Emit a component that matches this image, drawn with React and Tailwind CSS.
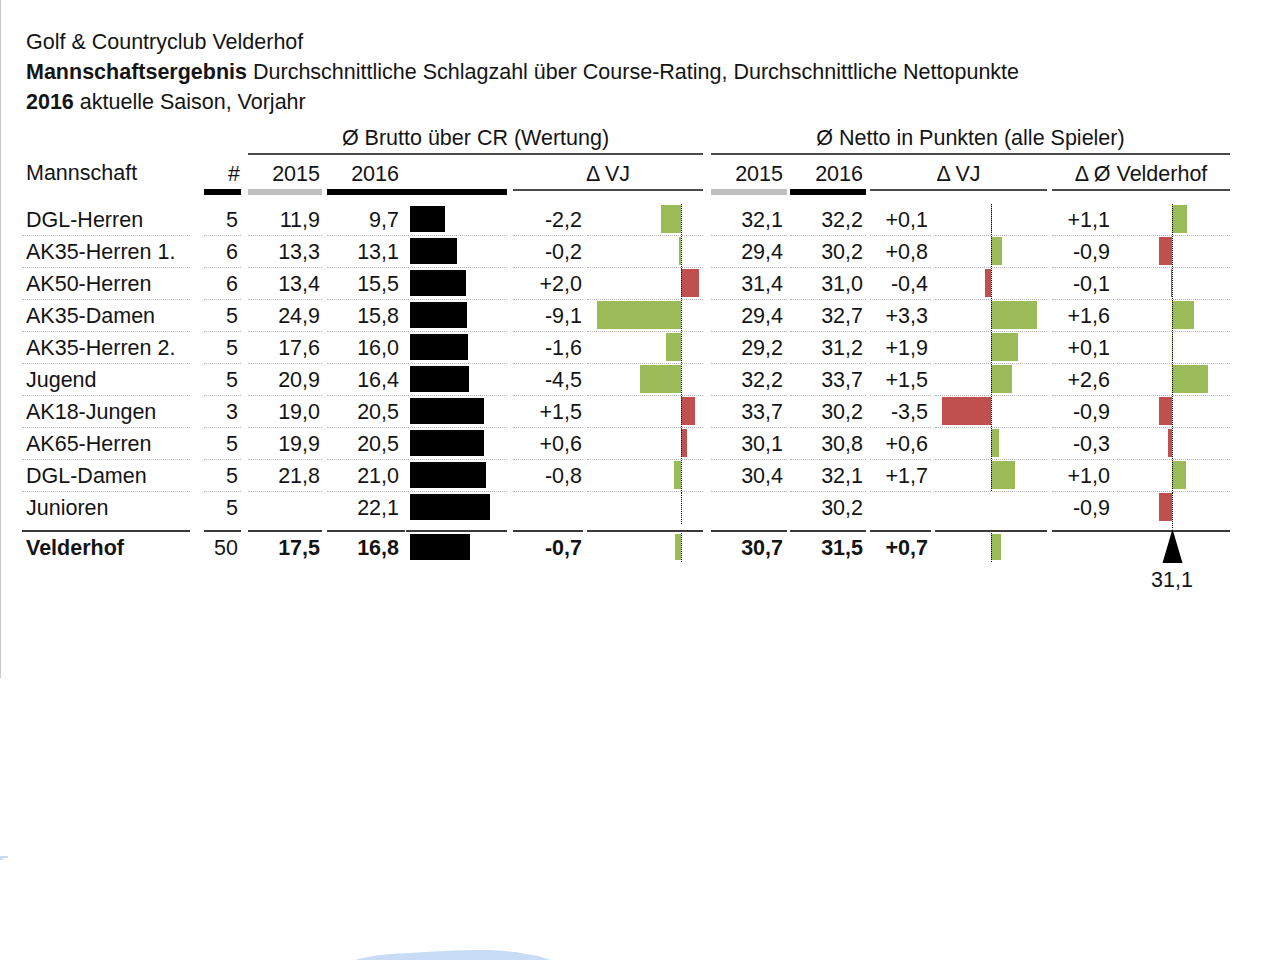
import React from "react";

const rows = [
  ["DGL-Herren", "5", "11,9", "9,7", 9.7, -2.2, "32,1", "32,2", 0.1, 1.1],
  ["AK35-Herren 1.", "6", "13,3", "13,1", 13.1, -0.2, "29,4", "30,2", 0.8, -0.9],
  ["AK50-Herren", "6", "13,4", "15,5", 15.5, 2.0, "31,4", "31,0", -0.4, -0.1],
  ["AK35-Damen", "5", "24,9", "15,8", 15.8, -9.1, "29,4", "32,7", 3.3, 1.6],
  ["AK35-Herren 2.", "5", "17,6", "16,0", 16.0, -1.6, "29,2", "31,2", 1.9, 0.1],
  ["Jugend", "5", "20,9", "16,4", 16.4, -4.5, "32,2", "33,7", 1.5, 2.6],
  ["AK18-Jungen", "3", "19,0", "20,5", 20.5, 1.5, "33,7", "30,2", -3.5, -0.9],
  ["AK65-Herren", "5", "19,9", "20,5", 20.5, 0.6, "30,1", "30,8", 0.6, -0.3],
  ["DGL-Damen", "5", "21,8", "21,0", 21.0, -0.8, "30,4", "32,1", 1.7, 1.0],
  ["Junioren", "5", "", "22,1", 22.1, null, "", "30,2", null, -0.9],
];

function fmt(v) {
  if (v == null) return "";
  const s = Math.abs(v).toFixed(1).replace(".", ",");
  return (v < 0 ? "-" : "+") + s;
}

function Delta({ v, scale, leftCls, axisCls, goodNeg, axis = true, barH = "h-[28px]", padTop = "pt-[1px]" }) {
  const w = v == null ? 0 : Math.abs(v) * scale;
  const good = v != null && (goodNeg ? v < 0 : v > 0);
  const color = good ? "bg-[#9bbb59]" : "bg-[#c0504d]";
  return (
    <div className="relative flex h-full">
      <div className={`${leftCls} flex justify-end items-start ${padTop}`}>
        {v != null && v < 0 && <div className={`${color} ${barH}`} style={{ width: w }} />}
      </div>
      <div className={`flex-1 flex items-start ${padTop}`}>
        {v != null && v > 0 && <div className={`${color} ${barH}`} style={{ width: w }} />}
      </div>
      {axis && <div className={`absolute top-0 bottom-0 ${axisCls} border-l border-dotted border-black`} />}
    </div>
  );
}

function DataRow({ r, last }) {
  const [name, num, y15, y16, bar, dv, n15, n16, ndv, dd] = r;
  const b = last ? "" : "border-b border-dotted border-[#b5b5b5]";
  return (
    <div className="flex h-[32px] leading-[32px]">
      <div className={`w-[168px] pl-[4px] text-left h-full ${b}`}>{name}</div>
      <div className={`ml-[14px] w-[37px] pr-[3px] text-right h-full ${b}`}>{num}</div>
      <div className={`ml-[7px] w-[74px] pr-[2px] text-right h-full ${b}`}>{y15}</div>
      <div className={`ml-[5px] w-[78px] pr-[6px] text-right h-full ${b}`}>{y16}</div>
      <div className={`ml-[1px] w-[101px] pl-[4px] pt-[2px] h-full ${b}`}>
        <div className="h-[26px] bg-black" style={{ width: Math.round(bar * 3.6) }} />
      </div>
      <div className={`ml-[6px] w-[70px] pr-[1px] text-right h-full ${b}`}>{fmt(dv)}</div>
      <div className={`ml-[4px] w-[116px] h-full ${b}`}>
        <Delta v={dv} scale={9.2} leftCls="w-[94px]" axisCls="left-[94px]" goodNeg />
      </div>
      <div className={`ml-[8px] w-[76px] pr-[4px] text-right h-full ${b}`}>{n15}</div>
      <div className={`ml-[3px] w-[76px] pr-[3px] text-right h-full ${b}`}>{n16}</div>
      <div className={`ml-[4px] w-[61px] pr-[3px] text-right h-full ${b}`}>{fmt(ndv)}</div>
      <div className={`ml-[4px] w-[112px] h-full ${b}`}>
        <Delta v={ndv} scale={14} leftCls="w-[56px]" axisCls="left-[56px]" axis={ndv != null} />
      </div>
      <div className={`ml-[5px] w-[62px] pr-[4px] text-right h-full ${b}`}>{fmt(dd)}</div>
      <div className={`ml-[3px] w-[113px] h-full ${b}`}>
        <Delta v={dd} scale={14} leftCls="w-[55px]" axisCls="left-[55px]" />
      </div>
    </div>
  );
}

function SummaryRow() {
  const t = "border-t-2 border-[#3a3a3a] h-[34px]";
  return (
    <div className="flex leading-[32px] mt-[6px]">
      <div className={`w-[168px] pl-[4px] text-left font-bold ${t}`}>Velderhof</div>
      <div className={`ml-[14px] w-[37px] pr-[3px] text-right ${t}`}>50</div>
      <div className={`ml-[7px] w-[74px] pr-[2px] text-right font-bold ${t}`}>17,5</div>
      <div className={`ml-[5px] w-[78px] pr-[6px] text-right font-bold ${t}`}>16,8</div>
      <div className={`ml-[1px] w-[101px] pl-[4px] pt-[2px] ${t}`}>
        <div className="h-[26px] bg-black" style={{ width: Math.round(16.8 * 3.6) }} />
      </div>
      <div className={`ml-[6px] w-[70px] pr-[1px] text-right font-bold ${t}`}>-0,7</div>
      <div className={`ml-[4px] w-[116px] ${t}`}>
        <div className="h-[30px] pt-[1px]">
          <Delta v={-0.7} scale={9.2} leftCls="w-[94px]" axisCls="left-[94px]" goodNeg barH="h-[26px]" padTop="pt-[1px]" />
        </div>
      </div>
      <div className={`ml-[8px] w-[76px] pr-[4px] text-right font-bold ${t}`}>30,7</div>
      <div className={`ml-[3px] w-[76px] pr-[3px] text-right font-bold ${t}`}>31,5</div>
      <div className={`ml-[4px] w-[61px] pr-[3px] text-right font-bold ${t}`}>+0,7</div>
      <div className={`ml-[4px] w-[112px] ${t}`}>
        <div className="h-[30px] pt-[1px]">
          <Delta v={0.7} scale={14} leftCls="w-[56px]" axisCls="left-[56px]" barH="h-[26px]" padTop="pt-[1px]" />
        </div>
      </div>
      <div className={`ml-[5px] w-[65px] ${t}`} />
      <div className={`w-[113px] relative ${t}`}>
        <svg className="absolute left-[45px] top-[-9px]" width="21" height="41" viewBox="0 0 21 41">
          <line x1="10.5" y1="0" x2="10.5" y2="6" stroke="#000" strokeWidth="1" strokeDasharray="1 1" />
          <polygon points="10.5,6 20.5,40 0.5,40" fill="#000" />
        </svg>
        <div className="absolute left-[55px] top-[34px] -translate-x-1/2 leading-[28px] whitespace-nowrap font-normal">31,1</div>
      </div>
    </div>
  );
}

export default function App() {
  return (
    <div className="relative w-[1280px] h-[960px] bg-white overflow-hidden text-[#141414] text-[21.5px] font-['Liberation_Sans',Arial,sans-serif]">
      <div className="h-[678px] border-l border-[#c6c6c6] pl-[21px] pt-[27px]">
        <div className="pl-[4px] leading-[30px]">
          <div>Golf &amp; Countryclub Velderhof</div>
          <div>
            <span className="font-bold">Mannschaftsergebnis</span> Durchschnittliche Schlagzahl über Course-Rating, Durchschnittliche Nettopunkte
          </div>
          <div>
            <span className="font-bold">2016</span> aktuelle Saison, Vorjahr
          </div>
        </div>

        {/* group headers */}
        <div className="flex">
          <div className="w-[226px]" />
          <div className="w-[455px] pt-[6px] leading-[30px] text-center border-b-2 border-[#4a4a4a]">Ø Brutto über CR (Wertung)</div>
          <div className="ml-[8px] w-[519px] pt-[6px] leading-[30px] text-center border-b-2 border-[#4a4a4a]">Ø Netto in Punkten (alle Spieler)</div>
        </div>

        {/* column headers */}
        <div className="flex pt-[2px]">
          <div className="w-[168px] pl-[4px] leading-[30px] pt-[1px]">Mannschaft</div>
          <div className="ml-[14px] w-[37px] flex flex-col">
            <div className="leading-[30px] pt-[2px] text-right pr-[1px]">#</div>
            <div className="h-[6px] bg-black" />
          </div>
          <div className="ml-[7px] w-[74px] flex flex-col">
            <div className="leading-[30px] pt-[2px] text-right pr-[2px]">2015</div>
            <div className="h-[6px] bg-[#bfbfbf]" />
          </div>
          <div className="ml-[5px] w-[180px] flex flex-col">
            <div className="leading-[30px] pt-[2px] text-right pr-[108px]">2016</div>
            <div className="h-[6px] bg-black" />
          </div>
          <div className="ml-[6px] w-[190px] flex flex-col">
            <div className="leading-[30px] pt-[2px] text-center">Δ VJ</div>
            <div className="h-[2px] bg-[#4a4a4a]" />
          </div>
          <div className="ml-[8px] w-[76px] flex flex-col">
            <div className="leading-[30px] pt-[2px] text-right pr-[4px]">2015</div>
            <div className="h-[6px] bg-[#bfbfbf]" />
          </div>
          <div className="ml-[3px] w-[76px] flex flex-col">
            <div className="leading-[30px] pt-[2px] text-right pr-[3px]">2016</div>
            <div className="h-[6px] bg-black" />
          </div>
          <div className="ml-[4px] w-[177px] flex flex-col">
            <div className="leading-[30px] pt-[2px] text-center">Δ VJ</div>
            <div className="h-[2px] bg-[#4a4a4a]" />
          </div>
          <div className="ml-[5px] w-[178px] flex flex-col">
            <div className="leading-[30px] pt-[2px] text-center">Δ Ø Velderhof</div>
            <div className="h-[2px] bg-[#4a4a4a]" />
          </div>
        </div>

        <div className="mt-[9px]">
          {rows.map((r, i) => (
            <DataRow key={r[0]} r={r} last={i === rows.length - 1} />
          ))}
        </div>
        <SummaryRow />
      </div>

      <svg className="absolute left-0 top-[855px]" width="10" height="6" viewBox="0 0 10 6">
        <path d="M0 1 L8 1 L8 3 L3 3 L3 5 L0 5 Z" fill="#c8dcf5" />
      </svg>
      <svg className="absolute left-[355px] top-[948px]" width="195" height="12" viewBox="0 0 195 12">
        <path d="M0 12 C20 6 40 6 70 4 C100 2 130 1 150 3 C170 5 185 8 195 12 Z" fill="#c8dcf5" />
      </svg>
    </div>
  );
}
